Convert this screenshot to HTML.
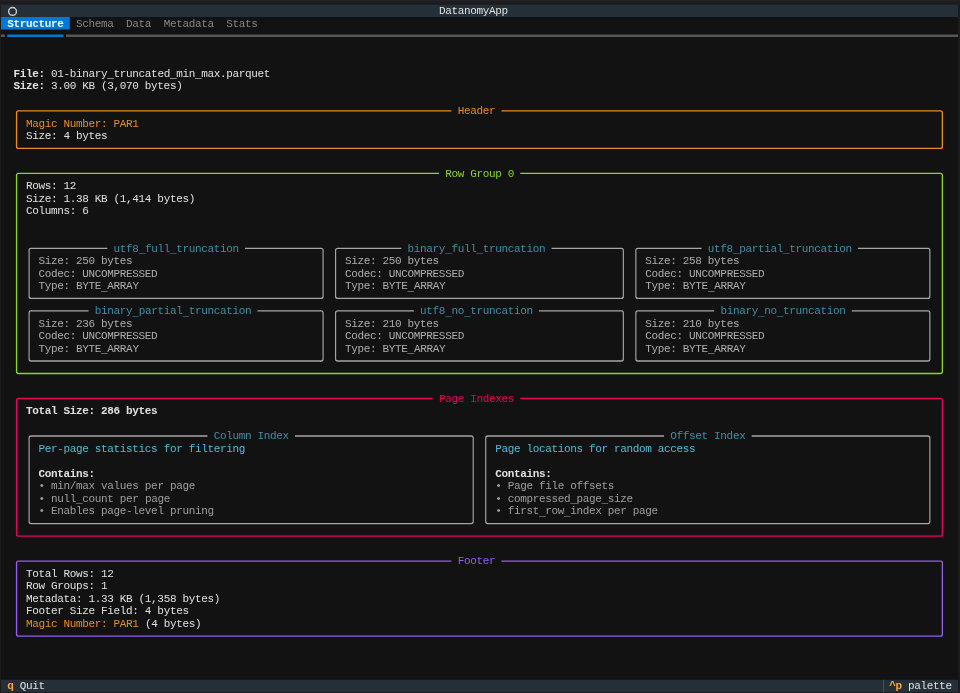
<!DOCTYPE html>
<html><head><meta charset="utf-8"><title>DatanomyApp</title>
<style>
html,body{margin:0;padding:0}
body{width:960px;height:693px;background:#121212;overflow:hidden;position:relative;font-family:"Liberation Mono",monospace;font-size:11.0px;line-height:12.505px}
#G{position:absolute;left:0;top:0}
#L{position:absolute;left:0;top:0;width:960px;height:693px;will-change:transform}
.t{position:absolute;white-space:pre;height:12.505px;letter-spacing:-0.346px}
.b{font-weight:bold}
i{font-style:normal;position:relative;top:1.6px}
</style></head><body>
<svg id="G" width="960" height="693" viewBox="0 0 960 693">
<rect x="0" y="0" width="960" height="693" fill="#1c1c1e"/>
<rect x="0" y="0" width="960" height="1.4" fill="#232327"/>
<rect x="0" y="692.275" width="960" height="0.725" fill="#202227"/>
<rect x="1" y="4.5" width="957.091" height="687.775" fill="#121212"/>
<rect x="1" y="4.5" width="957.091" height="12.505" fill="#242f38"/>
<circle cx="12.55" cy="11.4" r="3.9" fill="none" stroke="#cacaca" stroke-width="1.45"/>
<rect x="1" y="17.005" width="68.81" height="12.505" fill="#0178d4"/>
<rect x="1" y="34.513" width="3.878" height="2.5" fill="#565656"/>
<rect x="7.255" y="34.513" width="56.299" height="2.5" fill="#0178d4"/>
<rect x="65.995" y="34.513" width="892.097" height="2.5" fill="#565656"/>
<path d="M18.499 110.218H940.433A2.6 2.6 0 0 1 943.033 112.817V146.483A2.6 2.6 0 0 1 940.433 149.083H18.499A2.6 2.6 0 0 1 15.899 146.483V112.817A2.6 2.6 0 0 1 18.499 110.218ZM18.499 111.567H940.433A1.28 1.28 0 0 1 941.713 112.847V146.452A1.28 1.28 0 0 1 940.433 147.732H18.499A1.28 1.28 0 0 1 17.219 146.452V112.847A1.28 1.28 0 0 1 18.499 111.567Z" fill="#ea8d1f" fill-rule="evenodd"/>
<rect x="451.396" y="108.392" width="50.044" height="5" fill="#121212"/>
<path d="M18.499 172.742H940.433A2.6 2.6 0 0 1 943.033 175.342V371.572A2.6 2.6 0 0 1 940.433 374.173H18.499A2.6 2.6 0 0 1 15.899 371.572V175.342A2.6 2.6 0 0 1 18.499 172.742ZM18.499 174.092H940.433A1.28 1.28 0 0 1 941.713 175.372V371.543A1.28 1.28 0 0 1 940.433 372.823H18.499A1.28 1.28 0 0 1 17.219 371.543V175.372A1.28 1.28 0 0 1 18.499 174.092Z" fill="#8fd326" fill-rule="evenodd"/>
<rect x="438.885" y="170.917" width="81.322" height="5" fill="#121212"/>
<path d="M31.095 247.798H321.053A2.6 2.6 0 0 1 323.653 250.398V296.517A2.6 2.6 0 0 1 321.053 299.118H31.095A2.6 2.6 0 0 1 28.495 296.517V250.398A2.6 2.6 0 0 1 31.095 247.798ZM31.095 249.098H321.053A1.45 1.45 0 0 1 322.503 250.548V296.368A1.45 1.45 0 0 1 321.053 297.818H31.095A1.45 1.45 0 0 1 29.645 296.368V250.548A1.45 1.45 0 0 1 31.095 249.098Z" fill="#a6a6a6" fill-rule="evenodd"/>
<rect x="107.343" y="245.948" width="137.621" height="5" fill="#121212"/>
<path d="M337.614 247.798H621.317A2.6 2.6 0 0 1 623.917 250.398V296.517A2.6 2.6 0 0 1 621.317 299.118H337.614A2.6 2.6 0 0 1 335.014 296.517V250.398A2.6 2.6 0 0 1 337.614 247.798ZM337.614 249.098H621.317A1.45 1.45 0 0 1 622.767 250.548V296.368A1.45 1.45 0 0 1 621.317 297.818H337.614A1.45 1.45 0 0 1 336.164 296.368V250.548A1.45 1.45 0 0 1 337.614 249.098Z" fill="#a6a6a6" fill-rule="evenodd"/>
<rect x="401.352" y="245.948" width="150.132" height="5" fill="#121212"/>
<path d="M637.878 247.798H927.837A2.6 2.6 0 0 1 930.437 250.398V296.517A2.6 2.6 0 0 1 927.837 299.118H637.878A2.6 2.6 0 0 1 635.278 296.517V250.398A2.6 2.6 0 0 1 637.878 247.798ZM637.878 249.098H927.837A1.45 1.45 0 0 1 929.287 250.548V296.368A1.45 1.45 0 0 1 927.837 297.818H637.878A1.45 1.45 0 0 1 636.428 296.368V250.548A1.45 1.45 0 0 1 637.878 249.098Z" fill="#a6a6a6" fill-rule="evenodd"/>
<rect x="701.616" y="245.948" width="156.387" height="5" fill="#121212"/>
<path d="M31.095 310.323H321.053A2.6 2.6 0 0 1 323.653 312.923V359.043A2.6 2.6 0 0 1 321.053 361.643H31.095A2.6 2.6 0 0 1 28.495 359.043V312.923A2.6 2.6 0 0 1 31.095 310.323ZM31.095 311.623H321.053A1.45 1.45 0 0 1 322.503 313.073V358.893A1.45 1.45 0 0 1 321.053 360.343H31.095A1.45 1.45 0 0 1 29.645 358.893V313.073A1.45 1.45 0 0 1 31.095 311.623Z" fill="#a6a6a6" fill-rule="evenodd"/>
<rect x="88.577" y="308.473" width="168.898" height="5" fill="#121212"/>
<path d="M337.614 310.323H621.317A2.6 2.6 0 0 1 623.917 312.923V359.043A2.6 2.6 0 0 1 621.317 361.643H337.614A2.6 2.6 0 0 1 335.014 359.043V312.923A2.6 2.6 0 0 1 337.614 310.323ZM337.614 311.623H621.317A1.45 1.45 0 0 1 622.767 313.073V358.893A1.45 1.45 0 0 1 621.317 360.343H337.614A1.45 1.45 0 0 1 336.164 358.893V313.073A1.45 1.45 0 0 1 337.614 311.623Z" fill="#a6a6a6" fill-rule="evenodd"/>
<rect x="413.863" y="308.473" width="125.11" height="5" fill="#121212"/>
<path d="M637.878 310.323H927.837A2.6 2.6 0 0 1 930.437 312.923V359.043A2.6 2.6 0 0 1 927.837 361.643H637.878A2.6 2.6 0 0 1 635.278 359.043V312.923A2.6 2.6 0 0 1 637.878 310.323ZM637.878 311.623H927.837A1.45 1.45 0 0 1 929.287 313.073V358.893A1.45 1.45 0 0 1 927.837 360.343H637.878A1.45 1.45 0 0 1 636.428 358.893V313.073A1.45 1.45 0 0 1 637.878 311.623Z" fill="#a6a6a6" fill-rule="evenodd"/>
<rect x="714.127" y="308.473" width="137.621" height="5" fill="#121212"/>
<path d="M18.499 397.833H940.433A2.6 2.6 0 0 1 943.033 400.433V534.138A2.6 2.6 0 0 1 940.433 536.738H18.499A2.6 2.6 0 0 1 15.899 534.138V400.433A2.6 2.6 0 0 1 18.499 397.833ZM18.499 399.183H940.433A1.28 1.28 0 0 1 941.713 400.463V534.108A1.28 1.28 0 0 1 940.433 535.388H18.499A1.28 1.28 0 0 1 17.219 534.108V400.463A1.28 1.28 0 0 1 18.499 399.183Z" fill="#e6055c" fill-rule="evenodd"/>
<rect x="432.629" y="396.008" width="87.577" height="5" fill="#121212"/>
<path d="M31.095 435.373H471.185A2.6 2.6 0 0 1 473.785 437.973V521.608A2.6 2.6 0 0 1 471.185 524.208H31.095A2.6 2.6 0 0 1 28.495 521.608V437.973A2.6 2.6 0 0 1 31.095 435.373ZM31.095 436.673H471.185A1.45 1.45 0 0 1 472.635 438.123V521.458A1.45 1.45 0 0 1 471.185 522.908H31.095A1.45 1.45 0 0 1 29.645 521.458V438.123A1.45 1.45 0 0 1 31.095 436.673Z" fill="#a6a6a6" fill-rule="evenodd"/>
<rect x="207.431" y="433.523" width="87.577" height="5" fill="#121212"/>
<path d="M487.746 435.373H927.837A2.6 2.6 0 0 1 930.437 437.973V521.608A2.6 2.6 0 0 1 927.837 524.208H487.746A2.6 2.6 0 0 1 485.146 521.608V437.973A2.6 2.6 0 0 1 487.746 435.373ZM487.746 436.673H927.837A1.45 1.45 0 0 1 929.287 438.123V521.458A1.45 1.45 0 0 1 927.837 522.908H487.746A1.45 1.45 0 0 1 486.296 521.458V438.123A1.45 1.45 0 0 1 487.746 436.673Z" fill="#a6a6a6" fill-rule="evenodd"/>
<rect x="664.083" y="433.523" width="87.577" height="5" fill="#121212"/>
<path d="M18.499 560.398H940.433A2.6 2.6 0 0 1 943.033 562.998V634.178A2.6 2.6 0 0 1 940.433 636.778H18.499A2.6 2.6 0 0 1 15.899 634.178V562.998A2.6 2.6 0 0 1 18.499 560.398ZM18.499 561.748H940.433A1.28 1.28 0 0 1 941.713 563.028V634.148A1.28 1.28 0 0 1 940.433 635.428H18.499A1.28 1.28 0 0 1 17.219 634.148V563.028A1.28 1.28 0 0 1 18.499 561.748Z" fill="#925fee" fill-rule="evenodd"/>
<rect x="451.396" y="558.573" width="50.044" height="5" fill="#121212"/>
<rect x="1" y="679.77" width="957.091" height="12.505" fill="#242f38"/>
<rect x="883.025" y="679.77" width="0.9" height="12.505" fill="#4a555e"/>
</svg>
<div id="L">
<span class="t" style="left:438.885px;top:5.05px;color:#e0e0e0;">DatanomyApp</span>
<span class="t b" style="left:7.255px;top:17.555px;color:#f2f6fa;">Structure</span>
<span class="t" style="left:76.066px;top:17.555px;color:#868686;">Schema</span>
<span class="t" style="left:126.11px;top:17.555px;color:#868686;">Data</span>
<span class="t" style="left:163.643px;top:17.555px;color:#868686;">Metadata</span>
<span class="t" style="left:226.198px;top:17.555px;color:#868686;">Stats</span>
<span class="t b" style="left:13.511px;top:67.575px;color:#e0e0e0;">File:</span>
<span class="t" style="left:51.044px;top:67.575px;color:#e0e0e0;">01-binary<i>_</i>truncated<i>_</i>min<i>_</i>max.parquet</span>
<span class="t b" style="left:13.511px;top:80.08px;color:#e0e0e0;">Size:</span>
<span class="t" style="left:51.044px;top:80.08px;color:#e0e0e0;">3.00 KB (3,070 bytes)</span>
<span class="t" style="left:457.651px;top:105.09px;color:#ea8d1f;">Header</span>
<span class="t" style="left:26.022px;top:117.595px;color:#ea8d1f;">Magic Number: PAR1</span>
<span class="t" style="left:26.022px;top:130.1px;color:#e0e0e0;">Size: 4 bytes</span>
<span class="t" style="left:445.14px;top:167.615px;color:#8fd326;">Row Group 0</span>
<span class="t" style="left:26.022px;top:180.12px;color:#e0e0e0;">Rows: 12</span>
<span class="t" style="left:26.022px;top:192.625px;color:#e0e0e0;">Size: 1.38 KB (1,414 bytes)</span>
<span class="t" style="left:26.022px;top:205.13px;color:#e0e0e0;">Columns: 6</span>
<span class="t" style="left:113.599px;top:242.645px;color:#3e8fa6;">utf8<i>_</i>full<i>_</i>truncation</span>
<span class="t" style="left:38.533px;top:255.15px;color:#adadad;">Size: 250 bytes</span>
<span class="t" style="left:38.533px;top:267.655px;color:#adadad;">Codec: UNCOMPRESSED</span>
<span class="t" style="left:38.533px;top:280.16px;color:#adadad;">Type: BYTE<i>_</i>ARRAY</span>
<span class="t" style="left:407.607px;top:242.645px;color:#3e8fa6;">binary<i>_</i>full<i>_</i>truncation</span>
<span class="t" style="left:345.052px;top:255.15px;color:#adadad;">Size: 250 bytes</span>
<span class="t" style="left:345.052px;top:267.655px;color:#adadad;">Codec: UNCOMPRESSED</span>
<span class="t" style="left:345.052px;top:280.16px;color:#adadad;">Type: BYTE<i>_</i>ARRAY</span>
<span class="t" style="left:707.871px;top:242.645px;color:#3e8fa6;">utf8<i>_</i>partial<i>_</i>truncation</span>
<span class="t" style="left:645.316px;top:255.15px;color:#adadad;">Size: 258 bytes</span>
<span class="t" style="left:645.316px;top:267.655px;color:#adadad;">Codec: UNCOMPRESSED</span>
<span class="t" style="left:645.316px;top:280.16px;color:#adadad;">Type: BYTE<i>_</i>ARRAY</span>
<span class="t" style="left:94.832px;top:305.17px;color:#3e8fa6;">binary<i>_</i>partial<i>_</i>truncation</span>
<span class="t" style="left:38.533px;top:317.675px;color:#adadad;">Size: 236 bytes</span>
<span class="t" style="left:38.533px;top:330.18px;color:#adadad;">Codec: UNCOMPRESSED</span>
<span class="t" style="left:38.533px;top:342.685px;color:#adadad;">Type: BYTE<i>_</i>ARRAY</span>
<span class="t" style="left:420.118px;top:305.17px;color:#3e8fa6;">utf8<i>_</i>no<i>_</i>truncation</span>
<span class="t" style="left:345.052px;top:317.675px;color:#adadad;">Size: 210 bytes</span>
<span class="t" style="left:345.052px;top:330.18px;color:#adadad;">Codec: UNCOMPRESSED</span>
<span class="t" style="left:345.052px;top:342.685px;color:#adadad;">Type: BYTE<i>_</i>ARRAY</span>
<span class="t" style="left:720.382px;top:305.17px;color:#3e8fa6;">binary<i>_</i>no<i>_</i>truncation</span>
<span class="t" style="left:645.316px;top:317.675px;color:#adadad;">Size: 210 bytes</span>
<span class="t" style="left:645.316px;top:330.18px;color:#adadad;">Codec: UNCOMPRESSED</span>
<span class="t" style="left:645.316px;top:342.685px;color:#adadad;">Type: BYTE<i>_</i>ARRAY</span>
<span class="t" style="left:438.885px;top:392.705px;color:#e6055c;">Page Indexes</span>
<span class="t b" style="left:26.022px;top:405.21px;color:#e0e0e0;">Total Size: 286 bytes</span>
<span class="t" style="left:213.687px;top:430.22px;color:#3e8fa6;">Column Index</span>
<span class="t" style="left:38.533px;top:442.725px;color:#4fbdd8;">Per-page statistics for filtering</span>
<span class="t b" style="left:38.533px;top:467.735px;color:#e0e0e0;">Contains:</span>
<span class="t" style="left:38.533px;top:480.24px;color:#9e9e9e;">• min/max values per page</span>
<span class="t" style="left:38.533px;top:492.745px;color:#9e9e9e;">• null<i>_</i>count per page</span>
<span class="t" style="left:38.533px;top:505.25px;color:#9e9e9e;">• Enables page-level pruning</span>
<span class="t" style="left:670.338px;top:430.22px;color:#3e8fa6;">Offset Index</span>
<span class="t" style="left:495.184px;top:442.725px;color:#4fbdd8;">Page locations for random access</span>
<span class="t b" style="left:495.184px;top:467.735px;color:#e0e0e0;">Contains:</span>
<span class="t" style="left:495.184px;top:480.24px;color:#9e9e9e;">• Page file offsets</span>
<span class="t" style="left:495.184px;top:492.745px;color:#9e9e9e;">• compressed<i>_</i>page<i>_</i>size</span>
<span class="t" style="left:495.184px;top:505.25px;color:#9e9e9e;">• first<i>_</i>row<i>_</i>index per page</span>
<span class="t" style="left:457.651px;top:555.27px;color:#925fee;">Footer</span>
<span class="t" style="left:26.022px;top:567.775px;color:#e0e0e0;">Total Rows: 12</span>
<span class="t" style="left:26.022px;top:580.28px;color:#e0e0e0;">Row Groups: 1</span>
<span class="t" style="left:26.022px;top:592.785px;color:#e0e0e0;">Metadata: 1.33 KB (1,358 bytes)</span>
<span class="t" style="left:26.022px;top:605.29px;color:#e0e0e0;">Footer Size Field: 4 bytes</span>
<span class="t" style="left:26.022px;top:617.795px;color:#ea8d1f;">Magic Number: PAR1</span>
<span class="t" style="left:144.876px;top:617.795px;color:#e0e0e0;">(4 bytes)</span>
<span class="t b" style="left:7.255px;top:680.32px;color:#ffa62b;">q</span>
<span class="t" style="left:19.767px;top:680.32px;color:#e0e0e0;">Quit</span>
<span class="t b" style="left:889.281px;top:680.32px;color:#ffa62b;">^p</span>
<span class="t" style="left:908.047px;top:680.32px;color:#e0e0e0;">palette</span>
</div></body></html>
